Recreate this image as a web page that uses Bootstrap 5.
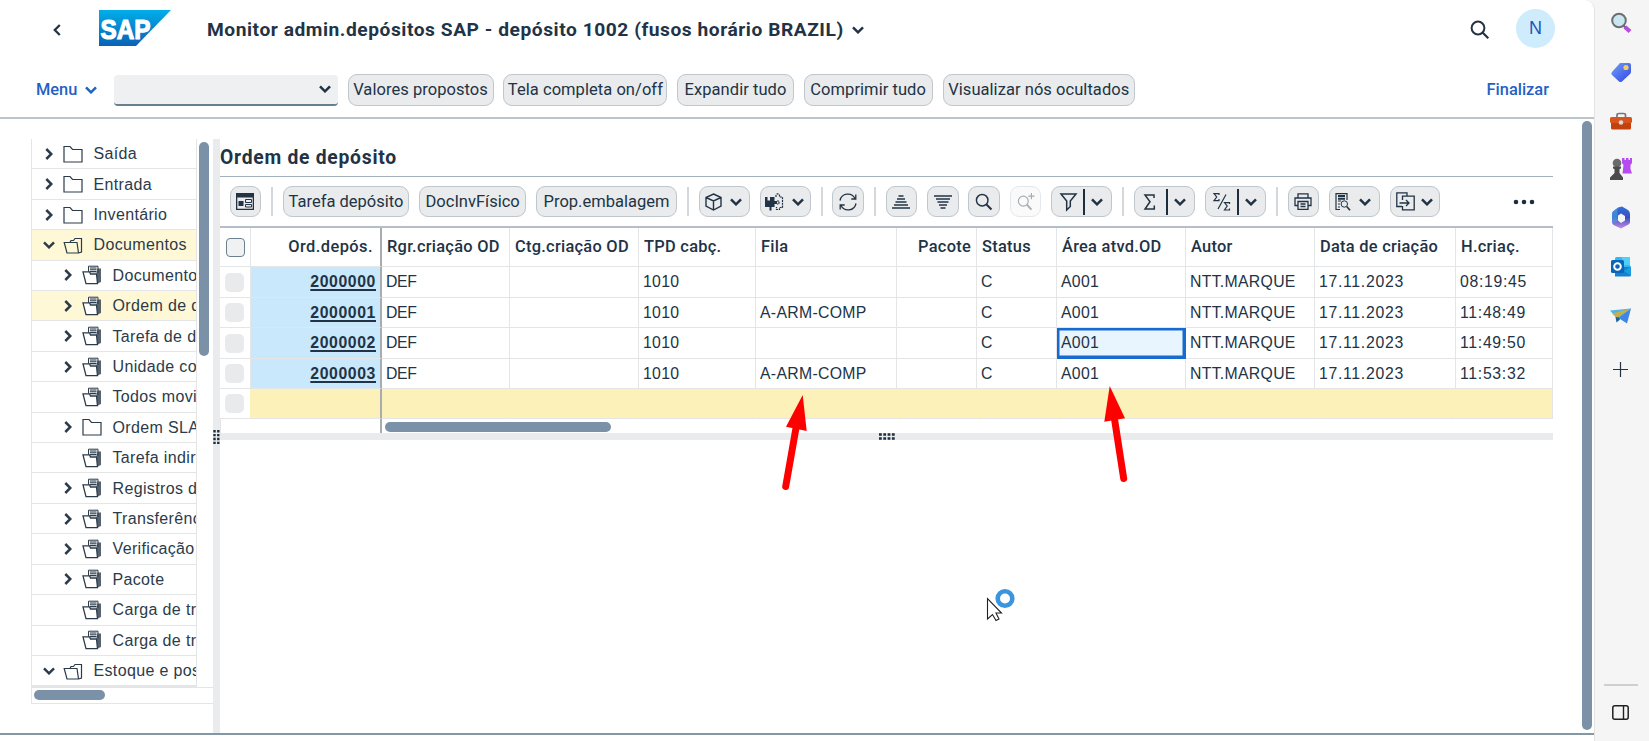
<!DOCTYPE html>
<html lang="pt-BR">
<head>
<meta charset="utf-8">
<title>Monitor admin.depósitos SAP</title>
<link href="https://cdn.jsdelivr.net/npm/bootstrap@5.3.0/dist/css/bootstrap.min.css" rel="stylesheet">
<style>
:root{--ink:#223345;--blue:#1f62c4;--line:#a3b1bd;--grid:#e3e5e7;--thumb:#7b91a8}
body{width:1649px;height:741px;overflow:hidden;background:#f5f5f5;color:var(--ink);font-family:"Liberation Sans",Arial,sans-serif;font-size:16px;line-height:1.2}
svg{flex:none;display:block;overflow:visible}
.ln{fill:none;stroke:currentColor}
.sb{font-family:Roboto,"Liberation Sans",sans-serif;font-weight:500}
.app{width:1595px;background:#fff;border-radius:0 10px 0 0;border-right:1px solid #e3e3e3}
.shell{height:60px;padding-left:53px}
.shell h1{font:700 19.2px/1 Roboto,sans-serif;letter-spacing:.54px;margin:0 0 0 36px;width:637px;white-space:nowrap}
.avatar{width:39px;height:39px;background:#cfecfc;color:#1a56c0;font-size:18px;margin:-3px 39px 0 26px}
.cmd{height:59px;border-bottom:2px solid #bcc5cd;padding:3px 45px 0 36px}
.cmd .bt,.tools{gap:9.89px}
.link-b{color:var(--blue);font-size:16.4px}
.combo{width:224px;height:31px;background:#eef0f1;border-bottom:2px solid #66808f;border-radius:4px;padding-right:7px;margin:0 9.5px 0 17px}
.bx{height:31.5px;border:1px solid #bfc6cc;border-radius:9px;background:#e9ebec;color:var(--ink);padding:0;display:flex;align-items:center;justify-content:center;flex:none;white-space:nowrap;font-size:16.5px}
.cmd .bx{letter-spacing:.05px}
.bx:disabled{opacity:.4;background:#f3f3f4}
.w31{width:31.5px}.w51{width:51px;gap:8px;padding-right:2px}.w61{width:61px;gap:6px}
.vsep{width:2px;height:29px;background:#d5d8db;flex:none}
.bar{width:2px;height:26px;background:#1d2d3e}
.work{height:614px;padding:20px 0 0 31px}
.foot{height:8px;border-top:2px solid #8497a4;background:#fff}
.tree{width:182px}
.list{width:166px;border:1px solid var(--grid);border-top:0;height:548px}
.nodew{height:30.42px;border-bottom:1px solid var(--grid);padding-left:11.5px;white-space:nowrap;overflow:hidden;letter-spacing:.35px;font-size:16px;color:#2c3b4a}
.nodew.sub{padding-left:30.5px}
.nodew.on{background:#fff8d6}
.nodew .ic{width:20px;margin-left:8px;margin-right:11px;flex:none}
.nodew .tw{width:11px;flex:none;display:flex;justify-content:center}
.thumb{background:var(--thumb);border-radius:5px}
.split{width:7px;background:#e9ebec}
.pane{width:1333px}
.pane h2{font:700 19.3px/1 Roboto,sans-serif;letter-spacing:.75px;height:38px;padding-top:9px;margin:0;border-bottom:1px solid var(--line)}
.tools{height:51px;padding-left:9.5px;border-bottom:2px solid #b4bec8}
.alv{table-layout:fixed;width:1333px;border-collapse:separate;border-spacing:0;margin:0;color:var(--ink)}
.alv th,.alv td{padding:0 5px;border:0;border-right:1px solid var(--grid);border-bottom:1px solid var(--grid);white-space:nowrap;vertical-align:middle;overflow:hidden;line-height:1.1}
.alv th{height:39px;font-family:Roboto,sans-serif;font-weight:500;font-size:16.4px;letter-spacing:.27px}
.alv td{height:30px;padding-left:4px;font-size:15.8px;letter-spacing:.3px}
.alv td:nth-child(3){letter-spacing:-.3px}
.alv td:nth-child(n+11){letter-spacing:.7px}
.alv tr.t31 td{height:31px}
.alv .key{border-right:2px solid #a9acaf;text-align:right}
.alv th.key{padding-right:7px;letter-spacing:.45px}
.alv td.key{background:#c9e8fb;font-weight:700;text-decoration:underline;text-underline-offset:2px;text-decoration-thickness:1.5px;padding-right:4px;letter-spacing:.6px}
.alv tr.tot td{background:#fcf1b9;border-right-color:#fcf1b9}
.alv tr.tot td.key{background:#fcf1b9;border-right-color:#a9acaf}
.alv tr.tot td:first-child{background:#fff}
.alv tr.tot td:last-child{border-right-color:var(--grid)}
.alv td.cur{background:#e8f5fe;box-shadow:inset 0 0 0 2.5px #176bd0;border-color:#176bd0}
.ck{width:19px;height:19px;border-radius:5px;background:#e9eaec;margin:0 0 0 1px;display:block}
th .ck{border:1.5px solid #6e7f8f;border-radius:4px;background:#f0f1f2}
.hs{height:14px}
.hs .frz{width:162px;border-right:2px solid #a9acaf;border-left:1px solid var(--grid)}
.vthumb{width:10px;height:609px;margin:2px 0 0 29px}
.side{width:54px;padding-right:3px}
.side svg.s{height:24px;margin-bottom:24.800px}
.over{position:absolute;left:0;top:0;pointer-events:none}
</style>
</head>
<body class="d-flex">
<svg width="0" height="0" class="position-absolute"><defs>
<symbol id="dn" viewBox="0 0 12 8"><path class="ln" stroke-width="2.5" d="M1 1.3 6 6.3 11 1.3"/></symbol>
<symbol id="rt" viewBox="0 0 8 12"><path class="ln" stroke-width="2.5" d="M1.3 1 6.3 6 1.3 11"/></symbol>
<symbol id="fd" viewBox="0 0 20 18"><path class="ln" stroke-width="1.2" d="M1 1.500H7L9.500 4.500H19V17H1Z"/></symbol>
<symbol id="op" viewBox="0 0 20 18"><path class="ln" stroke-width="1.2" d="M4 17H15.500L14 6.500H1.200ZM7 6.500 8 4.500H10.500L12 2.500H18.500V16L15.500 17"/></symbol>
<symbol id="dc" viewBox="0 0 20 20"><path fill="#eef0f1" stroke="currentColor" d="M6.500 8V1.200H16V8"/><path class="ln" stroke-width="1.1" d="M8 3h6.500M8 4.800h6.500M8 6.600h6.500"/><path fill="currentColor" d="M15.500 3.500H19V17L15.500 18.500 14.500 8Z" opacity=".8"/><path fill="#fff" stroke="currentColor" stroke-width="1.3" d="M4 18.700H15.500L14.500 9H8.500L7.500 6.800H1Z"/></symbol>
<symbol id="mg" viewBox="0 0 20 20"><circle class="ln" cx="8" cy="8" r="6.4"/><path class="ln" stroke-width="2.2" d="M12.5 12.5 18.3 18.3"/></symbol>
<linearGradient id="gs" x2="0" y2="1"><stop stop-color="#00aee9"/><stop offset="1" stop-color="#0b61b4"/></linearGradient>
<linearGradient id="gt" x2="1" y2="1"><stop stop-color="#6fa2f6"/><stop offset="1" stop-color="#3243e6"/></linearGradient>
<linearGradient id="gm" x2="0" y2="1"><stop stop-color="#2f6fd8"/><stop offset=".5" stop-color="#3d4fc0"/><stop offset="1" stop-color="#c58be8"/></linearGradient>
</defs></svg>

<main class="app d-flex flex-column">
  <header class="shell d-flex align-items-center">
    <svg width="8" height="12" viewBox="0 0 8 12"><path class="ln" stroke-width="2.3" d="M6.8 1 1.8 6 6.8 11"/></svg>
    <svg width="72" height="36" viewBox="0 0 72 36" style="margin-left:38px;margin-top:-4px"><path fill="url(#gs)" d="M0 0H72L37 36H0Z"/><text x="1.500" y="28.500" textLength="50" lengthAdjust="spacingAndGlyphs" font-family="Liberation Sans" font-weight="700" font-size="28" fill="#fff" stroke="#fff" stroke-width="1.2">SAP</text></svg>
    <h1>Monitor admin.depósitos SAP - depósito 1002 (fusos horário BRAZIL)</h1>
    <svg width="12" height="8" class="ms-2"><use href="#dn"/></svg>
    <svg width="20" height="20" class="ms-auto" stroke-width="2"><use href="#mg"/></svg>
    <span class="avatar rounded-circle d-flex align-items-center justify-content-center">N</span>
  </header>
  <nav class="cmd d-flex align-items-center sb">
    <span class="link-b" style="width:42px">Menu</span>
    <svg width="12" height="8" style="color:var(--blue);margin-left:7px"><use href="#dn"/></svg>
    <div class="combo d-flex align-items-center justify-content-end"><svg width="12" height="8"><use href="#dn"/></svg></div>
    <div class="bt d-flex">
      <button class="bx" style="width:146px">Valores propostos</button>
      <button class="bx" style="width:164px">Tela completa on/off</button>
      <button class="bx" style="width:116.5px">Expandir tudo</button>
      <button class="bx" style="width:129px">Comprimir tudo</button>
      <button class="bx" style="width:192.5px">Visualizar nós ocultados</button>
    </div>
    <span class="link-b ms-auto">Finalizar</span>
  </nav>

  <section class="work d-flex">
    <div class="tree d-flex flex-column">
      <div class="d-flex">
        <div class="list">
          <div class="nodew d-flex align-items-center"><span class="tw"><svg width="8" height="12"><use href="#rt"/></svg></span><svg class="ic" height="18"><use href="#fd"/></svg>Saída</div>
          <div class="nodew d-flex align-items-center"><span class="tw"><svg width="8" height="12"><use href="#rt"/></svg></span><svg class="ic" height="18"><use href="#fd"/></svg>Entrada</div>
          <div class="nodew d-flex align-items-center"><span class="tw"><svg width="8" height="12"><use href="#rt"/></svg></span><svg class="ic" height="18"><use href="#fd"/></svg>Inventário</div>
          <div class="nodew on d-flex align-items-center"><span class="tw"><svg width="12" height="8"><use href="#dn"/></svg></span><svg class="ic" height="18"><use href="#op"/></svg>Documentos</div>
          <div class="nodew sub d-flex align-items-center"><span class="tw"><svg width="8" height="12"><use href="#rt"/></svg></span><svg class="ic" height="20"><use href="#dc"/></svg>Documento</div>
          <div class="nodew sub on d-flex align-items-center"><span class="tw"><svg width="8" height="12"><use href="#rt"/></svg></span><svg class="ic" height="20"><use href="#dc"/></svg>Ordem de d</div>
          <div class="nodew sub d-flex align-items-center"><span class="tw"><svg width="8" height="12"><use href="#rt"/></svg></span><svg class="ic" height="20"><use href="#dc"/></svg>Tarefa de d</div>
          <div class="nodew sub d-flex align-items-center"><span class="tw"><svg width="8" height="12"><use href="#rt"/></svg></span><svg class="ic" height="20"><use href="#dc"/></svg>Unidade co</div>
          <div class="nodew sub d-flex align-items-center"><span class="tw"></span><svg class="ic" height="20"><use href="#dc"/></svg>Todos movi</div>
          <div class="nodew sub d-flex align-items-center"><span class="tw"><svg width="8" height="12"><use href="#rt"/></svg></span><svg class="ic" height="18"><use href="#fd"/></svg>Ordem SLA</div>
          <div class="nodew sub d-flex align-items-center"><span class="tw"></span><svg class="ic" height="20"><use href="#dc"/></svg>Tarefa indir</div>
          <div class="nodew sub d-flex align-items-center"><span class="tw"><svg width="8" height="12"><use href="#rt"/></svg></span><svg class="ic" height="20"><use href="#dc"/></svg>Registros d</div>
          <div class="nodew sub d-flex align-items-center"><span class="tw"><svg width="8" height="12"><use href="#rt"/></svg></span><svg class="ic" height="20"><use href="#dc"/></svg>Transferênc</div>
          <div class="nodew sub d-flex align-items-center"><span class="tw"><svg width="8" height="12"><use href="#rt"/></svg></span><svg class="ic" height="20"><use href="#dc"/></svg>Verificação</div>
          <div class="nodew sub d-flex align-items-center"><span class="tw"><svg width="8" height="12"><use href="#rt"/></svg></span><svg class="ic" height="20"><use href="#dc"/></svg>Pacote</div>
          <div class="nodew sub d-flex align-items-center"><span class="tw"></span><svg class="ic" height="20"><use href="#dc"/></svg>Carga de tr</div>
          <div class="nodew sub d-flex align-items-center"><span class="tw"></span><svg class="ic" height="20"><use href="#dc"/></svg>Carga de tr</div>
          <div class="nodew d-flex align-items-center"><span class="tw"><svg width="12" height="8"><use href="#dn"/></svg></span><svg class="ic" height="18"><use href="#op"/></svg>Estoque e pos</div>
        </div>
        <div class="thumb" style="width:10px;height:214px;margin:3px 0 0 2px"></div>
      </div>
      <div style="height:17px;border:1px solid var(--grid);border-right:0;padding:2px 0 0 2px"><div class="thumb" style="width:71px;height:10px"></div></div>
    </div>
    <div class="split"><svg width="7" height="15" viewBox="0 0 7 15" style="margin-top:291px"><path stroke="#1d2d3e" stroke-width="2.4" stroke-dasharray="2.4 1.5" d="M1.5 0V15M5.3 0V15"/></svg></div>
    <div class="pane">
      <h2>Ordem de depósito</h2>
      <div class="tools d-flex align-items-center sb">
        <button class="bx w31"><svg width="18" height="17" viewBox="0 0 18 17"><path fill="currentColor" d="M0 0H18V17H0ZM1.3 4.5V15.7H16.7V4.5Z" fill-rule="evenodd"/><path fill="currentColor" d="M2.5 8h5v5h-5Z"/><path class="ln" d="M9.5 6.5h6v3h-6ZM9.5 11.5h6v2.5h-6Z"/></svg></button>
        <span class="vsep"></span>
        <button class="bx" style="width:126.5px">Tarefa depósito</button>
        <button class="bx" style="width:107px">DocInvFísico</button>
        <button class="bx" style="width:141px">Prop.embalagem</button>
        <span class="vsep"></span>
        <button class="bx w51"><svg width="17" height="18" viewBox="0 0 17 18"><path class="ln" stroke-width="1.4" d="M8.5 1 16 4.5V13L8.5 17 1 13V4.5ZM1 4.5 8.5 8 16 4.5M8.5 8V17"/></svg><svg width="12" height="8"><use href="#dn"/></svg></button>
        <button class="bx w51"><svg width="19" height="18" viewBox="0 0 19 18"><path fill="currentColor" d="M0 4H2.500V7.500H5V4H9.500V8H12V11H9.500V14H6.500V17.500H4.500V14H0Z"/><path class="ln" stroke-width="1.2" stroke-dasharray="2 .8" d="M11 4V2.5C11 .5 14.5.5 14.5 2.5V4H17.5V14.5H14.5V16.5H11.5V14M12 8H14V11H12"/></svg><svg width="12" height="8"><use href="#dn"/></svg></button>
        <span class="vsep"></span>
        <button class="bx w31"><svg width="18" height="18" viewBox="0 0 18 18"><path class="ln" stroke-width="1.3" d="M1 7.5A8 8 0 0 1 16 5.5M16.8 1.5V6H12.3M17 10.5A8 8 0 0 1 2 12.5M1.2 16.5V12H5.7"/></svg></button>
        <span class="vsep"></span>
        <button class="bx w31"><svg width="18" height="14" viewBox="0 0 18 14"><path class="ln" stroke-width="1.4" d="M6.5 1h5M5 4h8M3.5 7h11M2 10h14M0 13h18"/></svg></button>
        <button class="bx w31"><svg width="18" height="14" viewBox="0 0 18 14"><path class="ln" stroke-width="1.4" d="M6.5 13h5M5 10h8M3.5 7h11M2 4h14M0 1h18"/></svg></button>
        <button class="bx w31"><svg width="18" height="18" stroke-width="1.6"><use href="#mg"/></svg></button>
        <button class="bx w31" disabled><svg width="18" height="18" viewBox="0 0 20 20"><circle class="ln" stroke-width="1.3" cx="7" cy="9" r="5.5"/><path class="ln" stroke-width="2" d="M11 13 16 18.5"/><path class="ln" stroke-width="1.3" d="M16 0V7M12.5 3.5H19.5"/></svg></button>
        <button class="bx w61"><svg width="17" height="18" viewBox="0 0 17 18"><path class="ln" stroke-width="1.5" d="M1 1H16L10.3 8V13.5L6.7 17V8Z"/></svg><span class="bar"></span><svg width="12" height="8"><use href="#dn"/></svg></button>
        <span class="vsep"></span>
        <button class="bx w61"><svg width="17" height="16" viewBox="0 0 17 16"><path class="ln" stroke-width="1.5" d="M11 4V1H2L7 7.700 2 15H11.300V11.500"/></svg><span class="bar"></span><svg width="12" height="8"><use href="#dn"/></svg></button>
        <button class="bx w61"><svg width="18" height="18" viewBox="0 0 18 18"><path class="ln" stroke-width="1.2" d="M6 2V.6H1L3.7 4 1 7.6H6V6M13 1.5 5 16M16.5 11V9.6H11.5L14.2 13 11.5 17H16.5V15.5"/></svg><span class="bar"></span><svg width="12" height="8"><use href="#dn"/></svg></button>
        <span class="vsep"></span>
        <button class="bx w31"><svg width="18" height="17" viewBox="0 0 18 17"><path class="ln" stroke-width="1.3" d="M4 5V.8H14V5M4 12.5H1V5H17V12.5H14M4 8.5H14V16.3H4ZM6.5 11h5M6.5 13.5h5"/></svg></button>
        <button class="bx w51"><svg width="16" height="18" viewBox="0 0 16 18"><path class="ln" stroke-width="1.2" d="M5 16.5H1V.7H12V7M3 8h3M3 11h2M3 14h2"/><path class="ln" stroke-width="2" d="M3 3h7M3 5.7h7"/><circle class="ln" cx="9.3" cy="11" r="3.2"/><path class="ln" stroke-width="1.6" d="M11.7 13.5 15 17.3"/></svg><svg width="12" height="8"><use href="#dn"/></svg></button>
        <button class="bx w51" style="width:50.5px;gap:6px"><svg width="19" height="19" viewBox="0 0 19 19"><path class="ln" stroke-width="1.3" d="M11 3.5V.8H.8V14.5H6M6.5 8V4.2H18.2V17.8H6.5V14M3.5 11H13M10 8 13 11 10 14"/></svg><svg width="12" height="8"><use href="#dn"/></svg></button>
        <svg width="22" height="6" viewBox="0 0 22 6" class="ms-auto" style="margin-right:18px"><path stroke="#1d2d3e" stroke-width="4.600" stroke-linecap="round" d="M3 3h0M11 3h0M19 3h0"/></svg>
      </div>
      <table class="alv">
        <colgroup><col style="width:31px"><col style="width:131px"><col style="width:128px"><col style="width:129px"><col style="width:117px"><col style="width:141px"><col style="width:80px"><col style="width:80px"><col style="width:129px"><col style="width:129px"><col style="width:141px"><col style="width:97px"></colgroup>
        <thead><tr><th><span class="ck"></span></th><th class="key">Ord.depós.</th><th>Rgr.criação OD</th><th>Ctg.criação OD</th><th>TPD cabç.</th><th>Fila</th><th class="text-end">Pacote</th><th>Status</th><th>Área atvd.OD</th><th>Autor</th><th>Data de criação</th><th>H.criaç.</th></tr></thead>
        <tbody>
        <tr class="t31"><td><span class="ck"></span></td><td class="key">2000000</td><td>DEF</td><td></td><td>1010</td><td></td><td></td><td>C</td><td>A001</td><td>NTT.MARQUE</td><td>17.11.2023</td><td>08:19:45</td></tr>
        <tr><td><span class="ck"></span></td><td class="key">2000001</td><td>DEF</td><td></td><td>1010</td><td>A-ARM-COMP</td><td></td><td>C</td><td>A001</td><td>NTT.MARQUE</td><td>17.11.2023</td><td>11:48:49</td></tr>
        <tr class="t31"><td><span class="ck"></span></td><td class="key">2000002</td><td>DEF</td><td></td><td>1010</td><td></td><td></td><td>C</td><td class="cur">A001</td><td>NTT.MARQUE</td><td>17.11.2023</td><td>11:49:50</td></tr>
        <tr><td><span class="ck"></span></td><td class="key">2000003</td><td>DEF</td><td></td><td>1010</td><td>A-ARM-COMP</td><td></td><td>C</td><td>A001</td><td>NTT.MARQUE</td><td>17.11.2023</td><td>11:53:32</td></tr>
        <tr class="tot"><td><span class="ck"></span></td><td class="key"></td><td></td><td></td><td></td><td></td><td></td><td></td><td></td><td></td><td></td><td></td></tr>
        </tbody>
      </table>
      <div class="hs d-flex"><div class="frz"></div><div class="thumb" style="width:226px;height:10px;margin:3px 0 0 3px"></div></div>
      <div style="height:7px;background:#e9ebec"><svg width="16" height="7" viewBox="0 0 16 7" style="margin-left:659px"><path stroke="#1d2d3e" stroke-width="2.6" stroke-dasharray="2.8 1.5" d="M0 1.5H16M0 5.5H16"/></svg></div>
    </div>
    <div class="thumb vthumb" style="margin-top:-18px"></div>
  </section>
  <div class="foot"></div>
</main>

<aside class="side d-flex flex-column align-items-center" style="padding-top:11px">
  <svg class="s" width="22" viewBox="0 0 22 24"><path stroke="#6b6f75" stroke-width="2.4" d="M13 14 16 17"/><path stroke="#b54fe0" stroke-width="4.2" d="M15 16 20 20.500"/><circle cx="9" cy="9.5" r="6.8" fill="#c9e5ee" stroke="#6b6f75" stroke-width="2"/></svg>
  <svg class="s" width="22" viewBox="0 0 22 24"><path fill="url(#gt)" d="M10 3H19Q21 3 21 5V12Q21 13 20 14L12 21.5Q10.5 22.5 9 21.5L2 15Q.5 13.500 2 12Z"/><circle cx="16" cy="7.500" r="2.6" fill="#f4cd62"/></svg>
  <svg class="s" width="22" viewBox="0 0 22 24"><g transform="translate(0 1.500)"><path fill="none" stroke="#777" stroke-width="1.700" d="M7 7V4.500Q7 3 9 3H13.500Q15.500 3 15.500 4.500V7"/><rect x="1" y="11" width="20" height="8" rx="1.500" fill="#c2410c"/><rect y="6.500" width="22" height="6" rx="1.500" fill="#d9531c"/><circle cx="11" cy="12" r="2.300" fill="#d9d9d9"/></g></svg>
  <svg class="s" width="22" viewBox="0 0 22 24"><path fill="#b44cf0" d="M12 1H14.500V3H16V1H18.500V3H20V1H22V6L20.500 8V12L22 16.500H12.500L13.500 8 12 6Z"/><circle cx="7" cy="6" r="4.300" fill="#6a6a6a"/><path fill="#4b4b4b" d="M3 9.500H11V11.500L9.500 12V16L13 20.500V23H0V20.500L4.500 16V12L3 11.500Z"/></svg>
  <svg class="s" width="22" viewBox="0 0 22 24"><path fill="url(#gm)" d="M8 1.500 12 .5 18 4Q20 5.500 20 8V16Q20 17.500 18.500 18.500L11 22.500 3.500 19Q2 18 2 16V8Q2 6 3.500 5ZM11 7.500 8 9.500V14.500L11 17 15 14.500V10Z" fill-rule="evenodd"/><path fill="#46b5ea" d="M2 15V8Q2 6 3.500 5L9 1.300Q7 3.500 7.500 7L8 14.500Q4 18.500 2 15Z" opacity=".5"/></svg>
  <svg class="s" width="22" viewBox="0 0 22 24"><rect x="5" y="2" width="15" height="19" rx="1.500" fill="#35b8f1"/><path fill="#1283d1" d="M5 12H21V20Q21 21.500 19.500 21.500H5Z"/><path fill="#50d0f8" d="M12 2H20V10H12Z"/><path fill="#1a9ce0" d="M14 16 21 11V20.500Z"/><rect x="1" y="5" width="13" height="13" rx="1.500" fill="#0a64b8"/><circle cx="7.500" cy="11.500" r="3.300" fill="none" stroke="#fff" stroke-width="2"/></svg>
  <svg class="s" width="22" viewBox="0 0 22 24"><g transform="translate(0 1.500)"><path fill="#4fb4e6" d="M0 5 21 3 8 14Z"/><path fill="#c9ae45" d="M2 8 21 3 7 12.500Z"/><path fill="#3f86ea" d="M21 3 17 18 8.500 12.500Z"/><path fill="#1d5f9c" d="M5.500 11.500 9 12 10 14 6.500 17Z"/></g></svg>
  <svg width="15" height="15" viewBox="0 0 15 15" style="margin-top:9px"><path class="ln" stroke="#222" stroke-width="1.200" d="M7.500 0V15M0 7.500H15"/></svg>
  <div class="mt-auto" style="width:34px;height:2px;background:#cfcfcf;margin-bottom:19px"></div>
  <svg width="17" height="15" viewBox="0 0 17 15" style="margin-bottom:21px"><rect x=".8" y=".8" width="15.400" height="13.400" rx="2" fill="none" stroke="#222" stroke-width="1.500"/><path stroke="#222" stroke-width="1.400" d="M11.500 1V14"/></svg>
</aside>

<!-- pointer and red callout arrows float above the page -->
<svg class="over" width="1649" height="741" viewBox="0 0 1649 741">
  <g fill="red" stroke="red"><path stroke-width="7" stroke-linecap="round" d="M785.700 486.500 796 428M1123.700 478.500 1114.500 419"/><path stroke="none" d="M802.700 395 786 426.700 806.700 431ZM1109.700 386 1104.300 421.700 1125 418.300Z"/></g>
  <circle cx="1005" cy="598.500" r="7.300" fill="#fff" stroke="#3c95dc" stroke-width="4.600"/>
  <path fill="#fff" stroke="#222" stroke-width="1.100" d="M987.500 598.500V619L992.500 614.500 996 620.500 999 619 996 613H1001.500Z"/>
</svg>
<script src="https://cdn.jsdelivr.net/npm/bootstrap@5.3.0/dist/js/bootstrap.bundle.min.js"></script>
</body>
</html>
